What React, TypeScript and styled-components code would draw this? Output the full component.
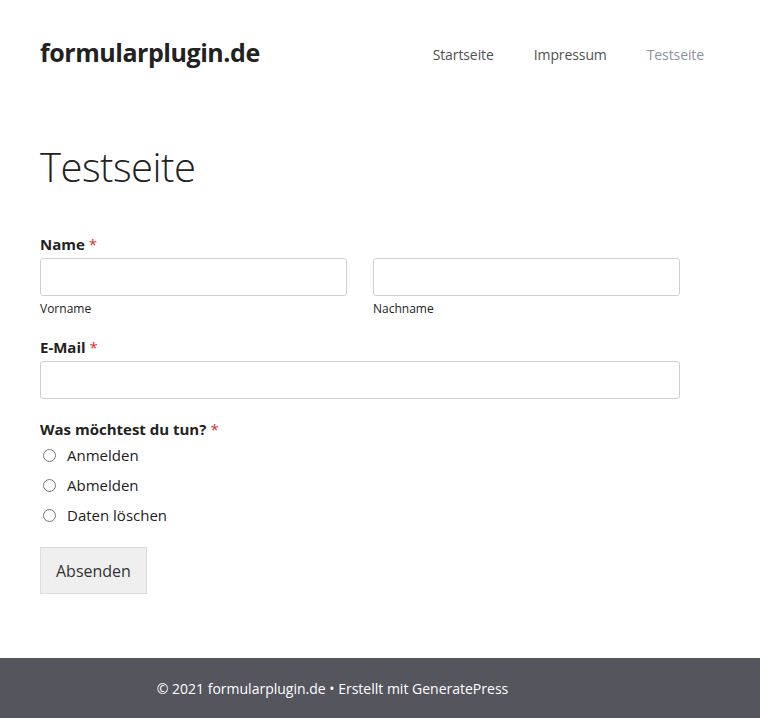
import styled, { createGlobalStyle } from 'styled-components'

const FONT = `"Open Sans", "Noto Sans", sans-serif`

const GlobalStyle = createGlobalStyle`
  html, body {
    margin: 0;
    padding: 0;
    background: #fff;
  }
  body {
    font-family: ${FONT};
    font-size: 17px;
    line-height: 1.5;
    color: #222;
  }
  * {
    box-sizing: border-box;
  }
`

const Page = styled.div`
  min-height: 718px;
  display: flex;
  flex-direction: column;
`

const Header = styled.header`
  display: flex;
  align-items: flex-start;
  justify-content: space-between;
  padding: 25px 36px 0 40px;
  height: 96px;
`

const SiteTitle = styled.a`
  font-size: 25px;
  font-weight: 700;
  line-height: 37px;
  color: #222;
  text-decoration: none;
  letter-spacing: -0.45px;
  margin-top: 9px;
`

const Nav = styled.nav`
  display: flex;
`

const NavLink = styled.a<{ $current?: boolean }>`
  padding: 0 20px;
  font-size: 14px;
  letter-spacing: -0.1px;
  line-height: 60px;
  color: ${p => (p.$current ? '#8f919e' : '#515151')};
  text-decoration: none;
`

const Main = styled.main`
  flex: 1;
  padding: 47px 40px 64px;
`

const Title = styled.h1`
  margin: 0 0 43px;
  font-size: 40px;
  font-weight: 300;
  line-height: 1.2;
  color: #222;
  letter-spacing: -0.5px;
`

const Form = styled.form`
  width: 640px;
  display: flex;
  flex-direction: column;
`

const Field = styled.div<{ $gap?: number }>`
  margin-bottom: ${p => p.$gap ?? 20}px;
`

const Label = styled.div`
  font-size: 15px;
  font-weight: 700;
  line-height: 20px;
  margin-bottom: 4px;
  color: #222;
`

const Req = styled.span`
  color: #e02b2b;
  font-weight: 400;
  margin-left: 4px;
`

const Split = styled.div`
  display: grid;
  grid-template-columns: 1fr 1fr;
  column-gap: 26px;
`

const Input = styled.input`
  display: block;
  width: 100%;
  height: 38px;
  border: 1px solid #cfcfcf;
  border-radius: 3px;
  background: #fff;
  font-family: ${FONT};
  font-size: 15px;
  padding: 0 10px;
`

const SubLabel = styled.div`
  font-size: 12px;
  line-height: 16px;
  margin-top: 5px;
  color: #222;
`

const RadioList = styled.div`
  display: flex;
  flex-direction: column;
  margin-top: -3px;
`

const RadioRow = styled.label`
  display: flex;
  align-items: center;
  height: 30px;
  font-size: 15px;
  color: #222;
`

const Radio = styled.span`
  width: 13px;
  height: 13px;
  border: 1px solid #777;
  border-radius: 50%;
  margin: 0 11px 0 3px;
  flex-shrink: 0;
`

const Button = styled.button`
  align-self: flex-start;
  height: 47px;
  padding: 0 15px;
  background: #efefef;
  border: 1px solid #dcdcdc;
  font-family: ${FONT};
  font-size: 16px;
  color: #333;
`

const Footer = styled.footer`
  background: #55555e;
  color: #fff;
  font-size: 14px;
  height: 60px;
  display: flex;
  align-items: center;
  justify-content: center;
  padding-right: 95px;
`

export default function App() {
  return (
    <Page>
      <GlobalStyle />
      <Header>
        <SiteTitle href="#">formularplugin.de</SiteTitle>
        <Nav>
          <NavLink href="#">Startseite</NavLink>
          <NavLink href="#">Impressum</NavLink>
          <NavLink href="#" $current>
            Testseite
          </NavLink>
        </Nav>
      </Header>
      <Main>
        <Title>Testseite</Title>
        <Form onSubmit={e => e.preventDefault()}>
          <Field>
            <Label>
              Name<Req>*</Req>
            </Label>
            <Split>
              <div>
                <Input type="text" />
                <SubLabel>Vorname</SubLabel>
              </div>
              <div>
                <Input type="text" />
                <SubLabel>Nachname</SubLabel>
              </div>
            </Split>
          </Field>
          <Field>
            <Label>
              E-Mail<Req>*</Req>
            </Label>
            <Input type="email" />
          </Field>
          <Field $gap={17}>
            <Label>
              Was möchtest du tun?<Req>*</Req>
            </Label>
            <RadioList>
              {['Anmelden', 'Abmelden', 'Daten löschen'].map(opt => (
                <RadioRow key={opt}>
                  <Radio />
                  {opt}
                </RadioRow>
              ))}
            </RadioList>
          </Field>
          <Button type="submit">Absenden</Button>
        </Form>
      </Main>
      <Footer>© 2021 formularplugin.de • Erstellt mit GeneratePress</Footer>
    </Page>
  )
}
